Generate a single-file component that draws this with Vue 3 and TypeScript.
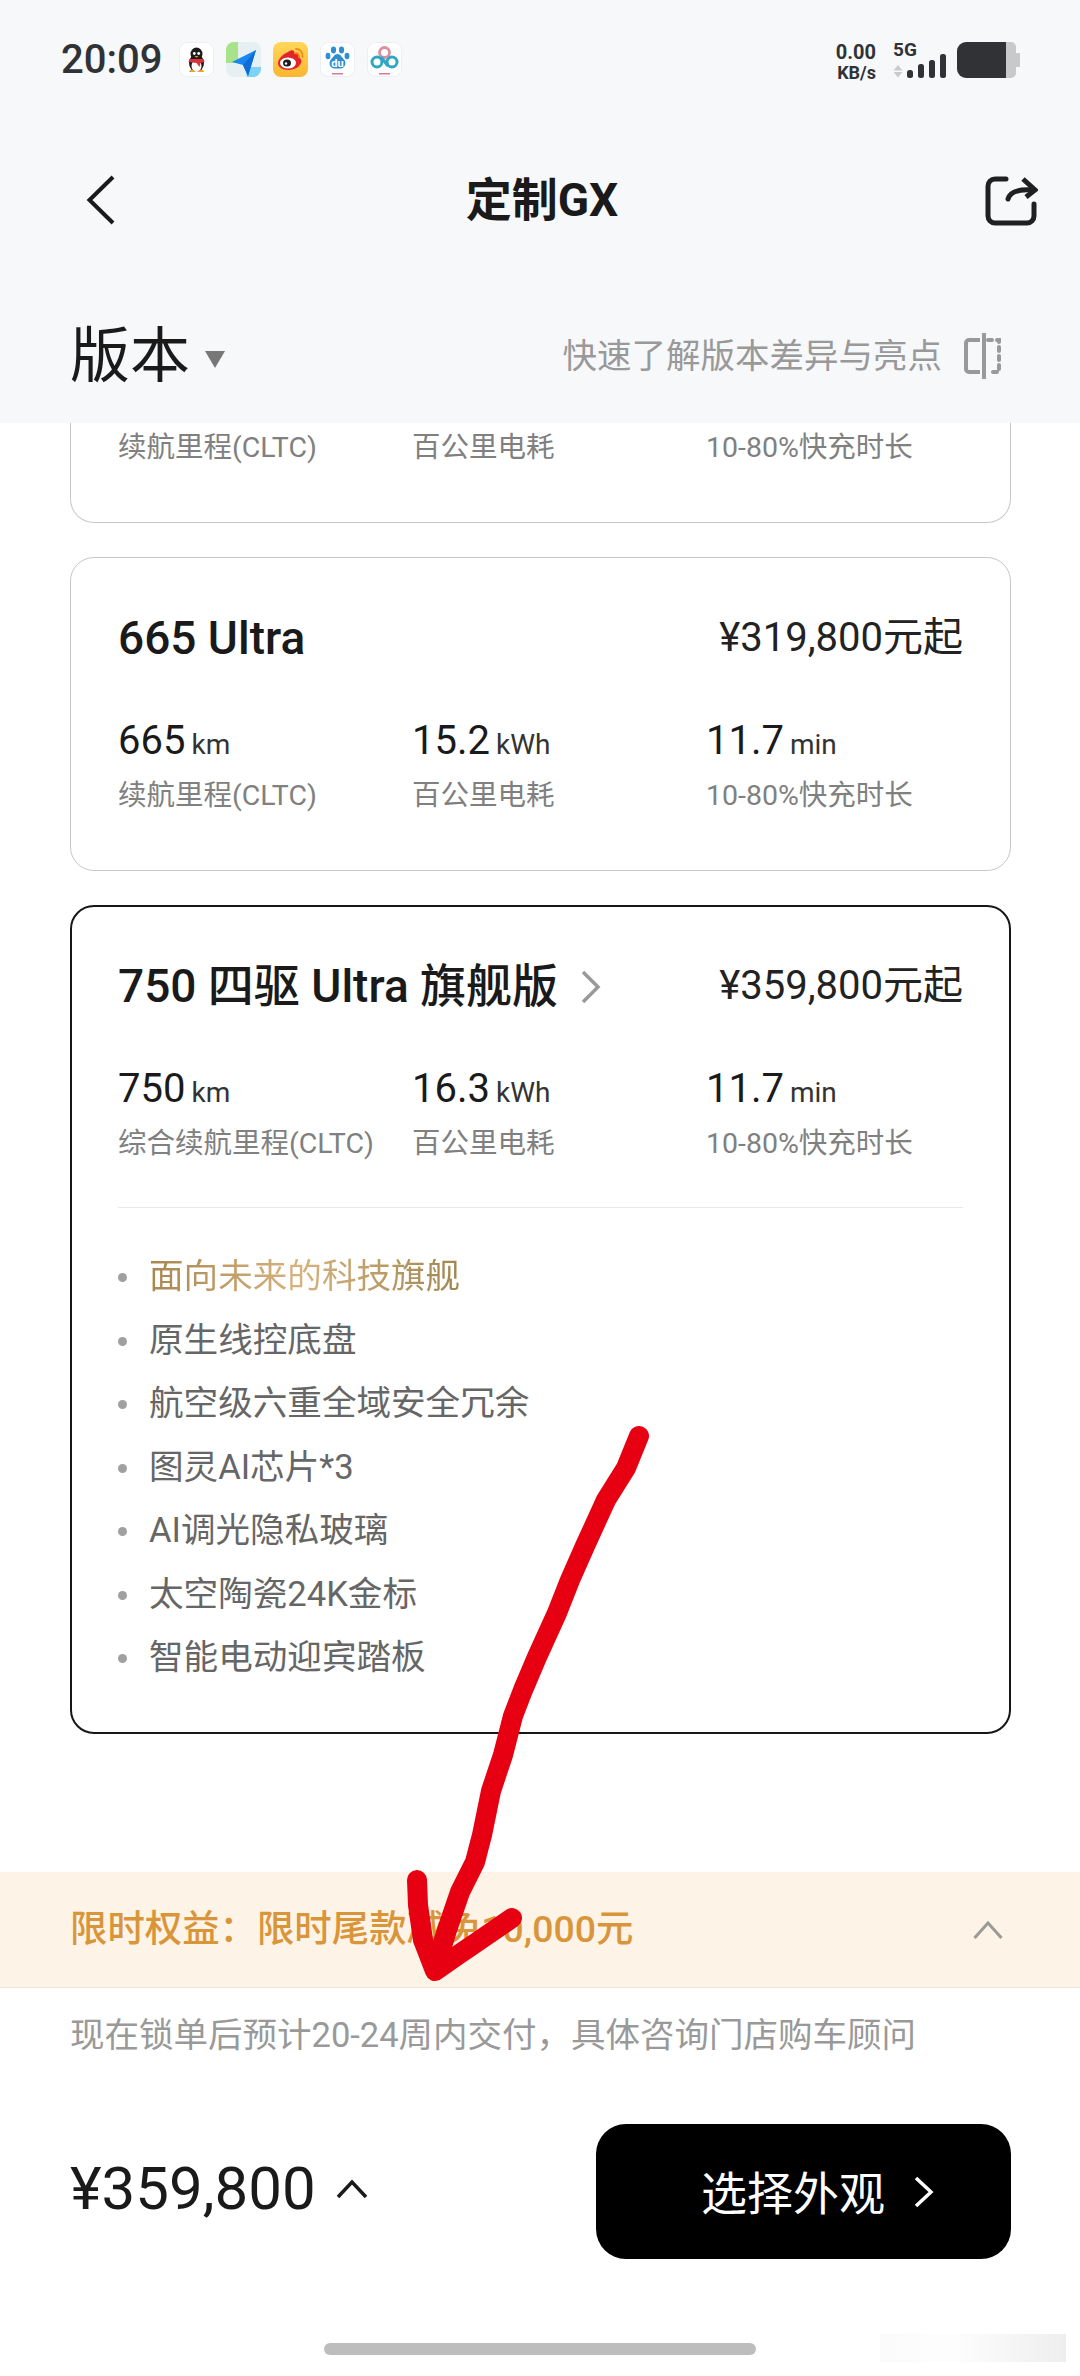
<template>
  <div class="page">
    <header class="header">
      <div class="status">
        <span class="time">20:09</span>
        <div class="notes">
          <!-- qq -->
          <svg class="app" viewBox="0 0 35 35">
            <rect x="0.5" y="0.5" width="34" height="34" rx="8" fill="#fff" stroke="#eceef1" />
            <ellipse cx="17.5" cy="21" rx="7.5" ry="9" fill="#1c1c1c" />
            <ellipse cx="17.5" cy="12" rx="6" ry="6.5" fill="#1c1c1c" />
            <ellipse cx="17.5" cy="24" rx="5" ry="6" fill="#fff" />
            <path d="M10.5 17h14l1 3-4 1-1 4-3-4-8-1z" fill="#d8323c" />
            <circle cx="15.3" cy="11.5" r="1.4" fill="#fff" />
            <circle cx="19.7" cy="11.5" r="1.4" fill="#fff" />
            <path d="M15.5 14h4l-2 1.8z" fill="#f0a020" />
            <path d="M10 30h6l-1-2h-4zM19 30h6l-1-2h-4z" fill="#f0a020" />
          </svg>
          <!-- amap -->
          <svg class="app" viewBox="0 0 35 35">
            <rect x="0" y="0" width="35" height="35" rx="8" fill="#e6eff1" />
            <path d="M0 8a8 8 0 0 1 8-8h4v21H0z" fill="#a8e38c" />
            <path d="M19 25h16v2a8 8 0 0 1-8 8h-6z" fill="#7dd3f7" />
            <path d="M30 8 6 20l11 3 5 11z" fill="#1a86f0" />
            <path d="M30 8 17 23l5 11z" fill="#0f6bd6" />
          </svg>
          <!-- weibo -->
          <svg class="app" viewBox="0 0 35 35">
            <defs>
              <linearGradient id="wb" x1="0" y1="0" x2="0" y2="1">
                <stop offset="0" stop-color="#ffd75a" />
                <stop offset="1" stop-color="#fbb62e" />
              </linearGradient>
            </defs>
            <rect width="35" height="35" rx="8" fill="url(#wb)" />
            <path d="M15 10c4-3 7-2 6.5 2 4-1 6 1 5 4 2 1 2.5 3 1.5 5-2 5-8 7-13 7-6 0-10-3-10-7 0-4 5-9 10-11z" fill="#e3242b" />
            <ellipse cx="15" cy="21" rx="8" ry="5.5" fill="#fff" />
            <ellipse cx="14" cy="21" rx="4" ry="3.5" fill="#1c1c1c" />
            <circle cx="13" cy="21.5" r="1.2" fill="#fff" />
            <path d="M23 7c4 0 7 3 6.5 8M23 11c2 0 3.5 1.5 3 4" fill="none" stroke="#f08a1d" stroke-width="1.8" stroke-linecap="round" />
          </svg>
          <!-- baidu -->
          <svg class="app" viewBox="0 0 35 35">
            <rect x="0.5" y="0.5" width="34" height="34" rx="8" fill="#fff" stroke="#eceef1" />
            <g fill="#2f8ed2">
              <ellipse cx="13.5" cy="8" rx="2.6" ry="3.4" />
              <ellipse cx="21.5" cy="8" rx="2.6" ry="3.4" />
              <ellipse cx="8" cy="14" rx="2.4" ry="3.2" />
              <ellipse cx="27" cy="14" rx="2.4" ry="3.2" />
              <path d="M17.5 12c3 0 4 3 6.5 5.5 3 3 1 9-3.5 9h-6c-4.5 0-6.5-6-3.5-9 2.500-2.500 3.500-5.500 6.500-5.500z" />
            </g>
            <text x="17.5" y="24.5" class="du" text-anchor="middle">du</text>
            <rect x="12" y="31" width="11" height="1.5" fill="#d77a9a" />
          </svg>
          <!-- cloud -->
          <svg class="app" viewBox="0 0 35 35">
            <rect x="0.5" y="0.5" width="34" height="34" rx="8" fill="#fff" stroke="#eceef1" />
            <circle cx="17.5" cy="10.5" r="5" fill="none" stroke="#dd8f9f" stroke-width="2.8" />
            <circle cx="10" cy="20" r="5" fill="none" stroke="#2ea7c4" stroke-width="3" />
            <circle cx="25" cy="20" r="5" fill="none" stroke="#2ea7c4" stroke-width="3" />
            <path d="M14 15l7 9" stroke="#2ea7c4" stroke-width="3" />
            <rect x="12" y="31" width="11" height="1.5" fill="#d77a9a" />
          </svg>
        </div>
        <div class="sys">
          <div class="speed"><b>0.00</b><b class="unit">KB/s</b></div>
          <div class="net">
            <span class="gen">5G</span>
            <svg width="54" height="24" viewBox="0 0 54 24">
              <path d="M5 11 9.5 16.5h-9zM5 23.5 .5 18h9z" fill="#c9cacc" />
              <rect x="14" y="16" width="6" height="8" rx="2.5" fill="#303236" />
              <rect x="25" y="10" width="6" height="14" rx="2.5" fill="#303236" />
              <rect x="36" y="6" width="6" height="18" rx="2.5" fill="#303236" />
              <rect x="47" y="0" width="6" height="24" rx="2.5" fill="#303236" />
            </svg>
          </div>
          <svg width="63" height="36" viewBox="0 0 63 36">
            <path d="M9 0h40v36H9a9 9 0 0 1-9-9V9a9 9 0 0 1 9-9z" fill="#303236" />
            <path d="M49 0h5a5 5 0 0 1 5 5v6h3a1 1 0 0 1 1 1v12a1 1 0 0 1-1 1h-3v6a5 5 0 0 1-5 5h-5z" fill="#c8c9ca" />
          </svg>
        </div>
      </div>

      <div class="nav">
        <svg width="36" height="52" viewBox="0 0 36 52" fill="none" stroke="#1a1a1a" stroke-width="4">
          <path d="M29 3 5.5 26 29 49" />
        </svg>
        <h1 class="title">定制GX</h1>
        <svg width="54" height="52" viewBox="0 0 54 52" fill="none" stroke="#1f2022" stroke-width="5" stroke-linecap="round">
          <path d="M22 5H11a7 7 0 0 0-7 7v30a7 7 0 0 0 7 7h32a7 7 0 0 0 7-7V30" />
          <path d="M24 25c2-7 9-10 24-9" />
          <path d="M39 5l12 11-9 7" stroke-linecap="butt" />
        </svg>
      </div>

      <div class="section">
        <div class="section-left">
          <span class="section-name">版本</span>
          <span class="tri"></span>
        </div>
        <div class="section-right">
          <span>快速了解版本差异与亮点</span>
          <svg width="38" height="48" viewBox="0 0 38 48" fill="none" stroke="#999" stroke-width="4">
            <path d="M16 8H5a3 3 0 0 0-3 3v26a3 3 0 0 0 3 3h11" />
            <path d="M20 1v46" />
            <path d="M24 8h11v32H24" stroke-dasharray="4 5" stroke-linecap="round" />
          </svg>
        </div>
      </div>
    </header>

    <main class="scroller">
      <div class="cards">
        <!-- the card above is scrolled under the header, only its last row shows -->
        <section class="card cut">
          <div class="specs flat">
            <div v-for="l in cutLabels" :key="l" class="lab">{{ l }}</div>
          </div>
        </section>
        <section v-for="car in cars" :key="car.name" class="card" :class="{ open: car.points }">
          <div class="card-top">
            <div class="name">
              {{ car.name }}
              <svg v-if="car.points" class="name-arrow" width="22" height="36" viewBox="0 0 22 36" fill="none" stroke="#999" stroke-width="3.5">
                <path d="M3 3l15 15L3 33" />
              </svg>
            </div>
            <div class="price">{{ car.price }}</div>
          </div>
          <div class="specs">
            <div v-for="s in car.specs" :key="s.label">
              <div class="val">{{ s.value }}<small>{{ s.unit }}</small></div>
              <div class="lab">{{ s.label }}</div>
            </div>
          </div>
          <ul v-if="car.points" class="points">
            <li v-for="(p, i) in car.points" :key="p">
              <span :class="{ gold: i === 0 }">{{ p }}</span>
            </li>
          </ul>
        </section>
      </div>
    </main>

    <footer class="footer">
      <div class="promo">
        <span class="promo-text">限时权益：限时尾款减免10,000元</span>
        <svg width="30" height="18" viewBox="0 0 30 18" fill="none" stroke="#9a9a98" stroke-width="3">
          <path d="M1.5 17 15 2l13.5 15" />
        </svg>
      </div>
      <p class="note">现在锁单后预计20-24周内交付，具体咨询门店购车顾问</p>
      <div class="buy">
        <div class="total">
          <span>¥359,800</span>
          <svg width="32" height="20" viewBox="0 0 32 20" fill="none" stroke="#1a1a1a" stroke-width="3.5">
            <path d="M2 18 16 3l14 15" />
          </svg>
        </div>
        <button class="next">
          <span class="next-text">选择外观</span>
          <svg width="22" height="32" viewBox="0 0 22 32" fill="none" stroke="#fff" stroke-width="3.5">
            <path d="M3 2l15 14L3 30" />
          </svg>
        </button>
      </div>
      <div class="home"></div>
    </footer>

    <div class="smudge"></div>

    <!-- hand drawn red arrow on top of the screenshot -->
    <svg class="scribble" width="1080" height="2376" viewBox="0 0 1080 2376" fill="none" stroke="#e60012" stroke-width="20" stroke-linecap="round" stroke-linejoin="round">
      <path d="M639 1436L626 1468 606 1500 585 1546 570 1580 557 1613 537 1657 523 1690 513 1716 503 1755 491 1791 482 1835 475 1862 460 1892 447 1930 435 1969" />
      <path d="M417 1880L418 1905 423 1940 435 1971 455 1957 480 1940 512 1918" />
    </svg>
  </div>
</template>

<script setup lang="ts">
interface Spec {
  value: string
  unit: string
  label: string
}

interface Car {
  name: string
  price: string
  specs: Spec[]
  points?: string[]
}

const charge: Spec = { value: '11.7', unit: 'min', label: '10-80%快充时长' }

const cutLabels = ['续航里程(CLTC)', '百公里电耗', '10-80%快充时长']

const cars: Car[] = [
  {
    name: '665 Ultra',
    price: '¥319,800元起',
    specs: [
      { value: '665', unit: 'km', label: '续航里程(CLTC)' },
      { value: '15.2', unit: 'kWh', label: '百公里电耗' },
      charge
    ]
  },
  {
    name: '750 四驱 Ultra 旗舰版',
    price: '¥359,800元起',
    specs: [
      { value: '750', unit: 'km', label: '综合续航里程(CLTC)' },
      { value: '16.3', unit: 'kWh', label: '百公里电耗' },
      charge
    ],
    points: [
      '面向未来的科技旗舰',
      '原生线控底盘',
      '航空级六重全域安全冗余',
      '图灵AI芯片*3',
      'AI调光隐私玻璃',
      '太空陶瓷24K金标',
      '智能电动迎宾踏板'
    ]
  }
]
</script>

<style scoped>
.page {
  position: relative;
  width: 1080px;
  height: 2376px;
  display: flex;
  flex-direction: column;
  overflow: hidden;
  background: #fff;
  color: #1a1a1a;
  font-family: Roboto, "Noto Sans CJK SC", sans-serif;
}

.header {
  height: 423px;
  flex: none;
  background: #f7f8fa;
  display: flex;
  flex-direction: column;
}

.status {
  height: 120px;
  flex: none;
  padding: 42px 60px 0 61px;
  box-sizing: border-box;
  display: flex;
  align-items: flex-start;
}

.time {
  font-size: 40px;
  line-height: 36px;
  font-weight: 500;
  color: #303236;
}

.notes {
  display: flex;
  gap: 12px;
  margin-left: 17px;
}

.app {
  width: 35px;
  height: 35px;
  display: block;
}

.du {
  font-family: Roboto, sans-serif;
  font-size: 11px;
  font-weight: 700;
  fill: #fff;
}

.sys {
  margin-left: auto;
  display: flex;
  align-items: flex-start;
}

.speed {
  display: flex;
  flex-direction: column;
  align-items: flex-end;
  font-size: 20px;
  line-height: 20px;
  color: #303236;
  width: 43px;
}

.unit {
  font-size: 18px;
  margin-top: 1px;
}

.net {
  margin-left: 17px;
  margin-right: 10px;
  width: 54px;
  position: relative;
  height: 36px;
}

.net svg {
  position: absolute;
  left: 0;
  top: 12px;
}

.gen {
  position: absolute;
  left: 0;
  top: -1px;
  font-size: 19px;
  line-height: 18px;
  font-weight: 700;
  color: #303236;
}

.nav {
  height: 160px;
  flex: none;
  padding: 0 42px 0 84px;
  box-sizing: border-box;
  display: flex;
  align-items: center;
  justify-content: space-between;
}

.title {
  margin: 0;
  font-size: 46px;
  line-height: 60px;
  font-weight: 700;
  color: #1a1a1a;
  position: relative;
  left: -10px;
}

.section {
  flex: 1;
  display: flex;
  align-items: center;
  justify-content: space-between;
  padding: 9px 78px 0 70px;
}

.section-left {
  display: flex;
  align-items: center;
  margin-top: 2px;
}

.section-name {
  font-size: 60px;
  line-height: 70px;
  font-weight: 400;
  color: #1a1a1a;
}

.tri {
  width: 0;
  height: 0;
  margin: 4px 0 0 15px;
  border-left: 10px solid transparent;
  border-right: 10px solid transparent;
  border-top: 17px solid #777;
}

.section-right {
  display: flex;
  align-items: center;
  gap: 22px;
  font-size: 34.5px;
  line-height: 48px;
  color: #999;
}

.scroller {
  flex: 1;
  min-height: 0;
  overflow: hidden;
}

.cards {
  padding: 0 69px 0 70px;
  display: flex;
  flex-direction: column;
  gap: 34px;
}

.card {
  border: 1px solid #c8c8ca;
  border-radius: 24px;
  padding: 56px 47px 54px;
  background: #fff;
}

.card.cut {
  border-top: 0;
  border-radius: 0 0 24px 24px;
  padding: 5px 47px 54px;
}

.card.open {
  border: 2px solid #161616;
  padding: 55px 46px 42px;
}

.card-top {
  display: flex;
  justify-content: space-between;
  align-items: center;
  height: 48px;
}

.name {
  display: flex;
  align-items: center;
  gap: 10px;
  font-size: 46px;
  line-height: 48px;
  font-weight: 500;
  white-space: pre;
}

.name-arrow {
  margin-top: 2px;
}

.price {
  font-size: 40px;
  line-height: 48px;
  color: #222;
}

.specs {
  display: grid;
  grid-template-columns: 294px 294px 1fr;
  margin-top: 55px;
}

.specs.flat {
  margin-top: 0;
}

.specs.flat .lab {
  margin-top: 0;
}

.val {
  font-size: 40px;
  line-height: 48px;
  height: 48px;
  color: #1a1a1a;
}

.val small {
  margin-left: 6px;
  font-size: 28px;
  line-height: 1;
  color: #333;
}

.lab {
  margin-top: 11px;
  font-size: 28.5px;
  line-height: 40px;
  color: #808080;
  white-space: nowrap;
}

.points {
  list-style: none;
  margin: 43px 0 0;
  padding: 37px 0 0;
  border-top: 1px solid #e8e8e8;
}

.points li {
  position: relative;
  padding-left: 31px;
  font-size: 34.6px;
  line-height: 63.5px;
  height: 63.5px;
  color: #666;
}

.points li::before {
  content: "";
  position: absolute;
  left: 0;
  top: 28px;
  width: 9px;
  height: 9px;
  border-radius: 50%;
  background: #a0a0a0;
}

.gold {
  background: linear-gradient(90deg, #a98550, #d6b27e 48%, #a08650);
  -webkit-background-clip: text;
  background-clip: text;
  color: transparent;
}

.footer {
  flex: none;
}

.promo {
  height: 115px;
  padding: 0 77px 0 70px;
  display: flex;
  align-items: center;
  justify-content: space-between;
  background: #fdf3e6;
  border-bottom: 1px solid #eee7dd;
  font-size: 37.4px;
  font-weight: 500;
  color: #d9953a;
}

.promo-text {
  margin-bottom: 7px;
}

.note {
  margin: 0;
  padding: 23px 70px 0;
  font-size: 34.5px;
  line-height: 48px;
  color: #999;
  white-space: nowrap;
}

.buy {
  margin-top: 65px;
  padding: 0 69px 0 70px;
  display: flex;
  align-items: center;
  justify-content: space-between;
}

.total {
  display: flex;
  align-items: center;
  gap: 20px;
  margin-bottom: 6px;
  font-size: 60px;
  line-height: 70px;
  color: #1a1a1a;
}

.next {
  width: 415px;
  height: 135px;
  padding: 0 0 0 105px;
  border: 0;
  border-radius: 30px;
  background: #000;
  color: #fff;
  font: inherit;
  font-size: 46px;
  display: flex;
  align-items: center;
  gap: 28px;
}

.next-text {
  margin-bottom: 4px;
}

.home {
  width: 432px;
  height: 12px;
  margin: 84px auto 21px;
  border-radius: 6px;
  background: #bdbdbd;
}

.smudge {
  position: absolute;
  left: 880px;
  bottom: 14px;
  width: 186px;
  height: 28px;
  background: linear-gradient(90deg, #fbfbfb, #fdfdfd 40%, #eeeeee);
}

.scribble {
  position: absolute;
  left: 0;
  top: 0;
  pointer-events: none;
}
</style>
